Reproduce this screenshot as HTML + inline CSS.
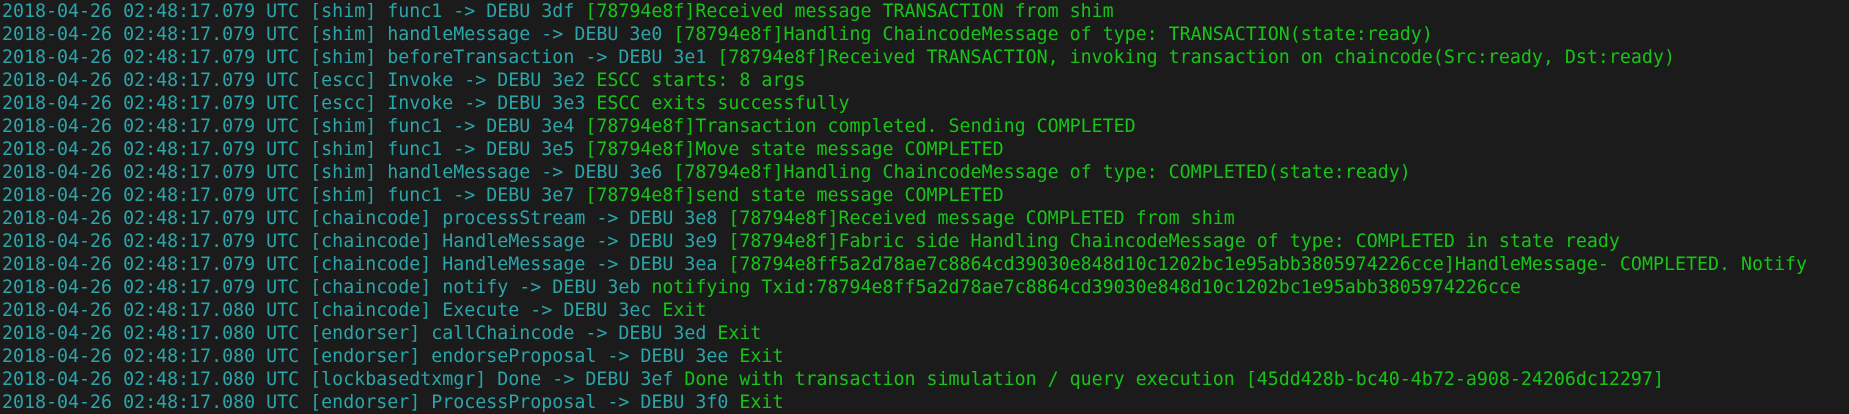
<!DOCTYPE html>
<html><head><meta charset="utf-8"><style>
html,body{margin:0;padding:0;background:#1b1b1b;width:1849px;height:414px;overflow:hidden}
pre{margin:0;padding:0 0 0 2px;font-family:"DejaVu Sans Mono","Liberation Mono",monospace;font-size:18.3px;line-height:23px;color:#2ba5a9;white-space:pre}
.g{color:#17c417}
</style></head><body><pre>2018-04-26 02:48:17.079 UTC [shim] func1 -> DEBU 3df <span class="g">[78794e8f]Received message TRANSACTION from shim</span>
2018-04-26 02:48:17.079 UTC [shim] handleMessage -> DEBU 3e0 <span class="g">[78794e8f]Handling ChaincodeMessage of type: TRANSACTION(state:ready)</span>
2018-04-26 02:48:17.079 UTC [shim] beforeTransaction -> DEBU 3e1 <span class="g">[78794e8f]Received TRANSACTION, invoking transaction on chaincode(Src:ready, Dst:ready)</span>
2018-04-26 02:48:17.079 UTC [escc] Invoke -> DEBU 3e2 <span class="g">ESCC starts: 8 args</span>
2018-04-26 02:48:17.079 UTC [escc] Invoke -> DEBU 3e3 <span class="g">ESCC exits successfully</span>
2018-04-26 02:48:17.079 UTC [shim] func1 -> DEBU 3e4 <span class="g">[78794e8f]Transaction completed. Sending COMPLETED</span>
2018-04-26 02:48:17.079 UTC [shim] func1 -> DEBU 3e5 <span class="g">[78794e8f]Move state message COMPLETED</span>
2018-04-26 02:48:17.079 UTC [shim] handleMessage -> DEBU 3e6 <span class="g">[78794e8f]Handling ChaincodeMessage of type: COMPLETED(state:ready)</span>
2018-04-26 02:48:17.079 UTC [shim] func1 -> DEBU 3e7 <span class="g">[78794e8f]send state message COMPLETED</span>
2018-04-26 02:48:17.079 UTC [chaincode] processStream -> DEBU 3e8 <span class="g">[78794e8f]Received message COMPLETED from shim</span>
2018-04-26 02:48:17.079 UTC [chaincode] HandleMessage -> DEBU 3e9 <span class="g">[78794e8f]Fabric side Handling ChaincodeMessage of type: COMPLETED in state ready</span>
2018-04-26 02:48:17.079 UTC [chaincode] HandleMessage -> DEBU 3ea <span class="g">[78794e8ff5a2d78ae7c8864cd39030e848d10c1202bc1e95abb3805974226cce]HandleMessage- COMPLETED. Notify</span>
2018-04-26 02:48:17.079 UTC [chaincode] notify -> DEBU 3eb <span class="g">notifying Txid:78794e8ff5a2d78ae7c8864cd39030e848d10c1202bc1e95abb3805974226cce</span>
2018-04-26 02:48:17.080 UTC [chaincode] Execute -> DEBU 3ec <span class="g">Exit</span>
2018-04-26 02:48:17.080 UTC [endorser] callChaincode -> DEBU 3ed <span class="g">Exit</span>
2018-04-26 02:48:17.080 UTC [endorser] endorseProposal -> DEBU 3ee <span class="g">Exit</span>
2018-04-26 02:48:17.080 UTC [lockbasedtxmgr] Done -> DEBU 3ef <span class="g">Done with transaction simulation / query execution [45dd428b-bc40-4b72-a908-24206dc12297]</span>
2018-04-26 02:48:17.080 UTC [endorser] ProcessProposal -> DEBU 3f0 <span class="g">Exit</span></pre></body></html>
